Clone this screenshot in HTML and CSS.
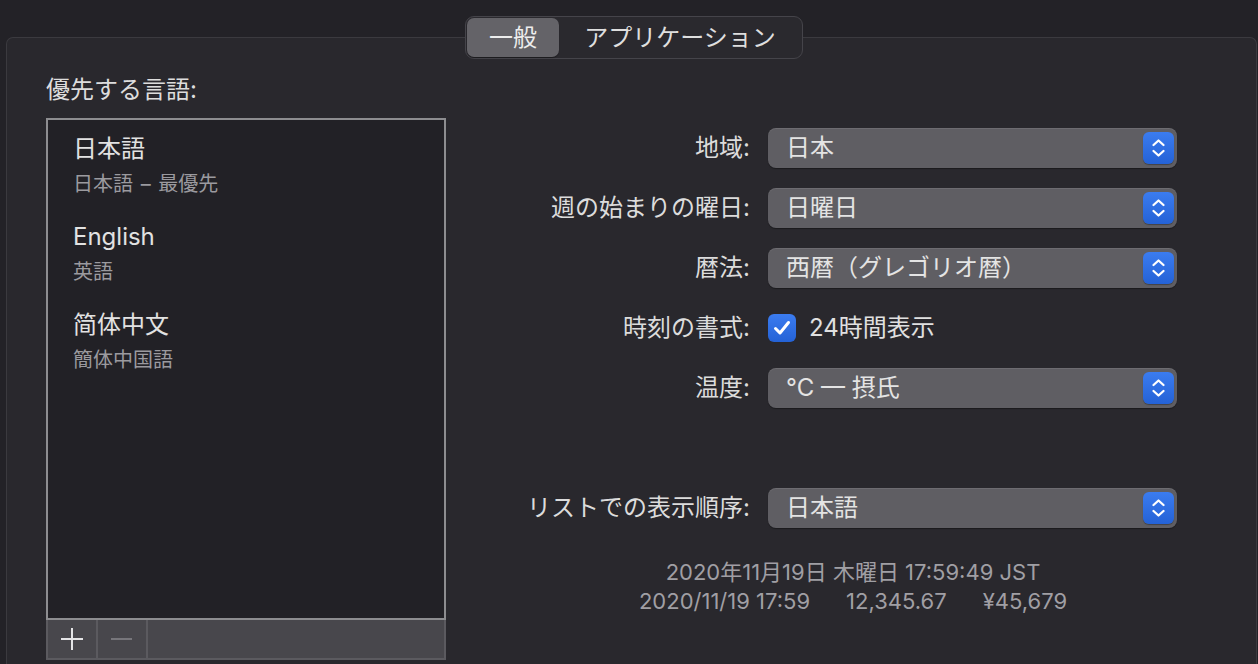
FILE: index.html
```html
<!DOCTYPE html>
<html lang="ja">
<head>
<meta charset="utf-8">
<title>言語と地域</title>
<link rel="stylesheet" href="styles.css">
</head>
<body>
<div class="window">
  <div class="tabs-row">
    <div class="segmented">
      <div class="seg seg-active">一般</div>
      <div class="seg seg-second">アプリケーション</div>
    </div>
  </div>
  <div class="panel">
    <div class="left">
      <div class="section-label">優先する言語:</div>
      <div class="langlist">
        <div class="lang-items">
          <div class="lang">
            <div class="lang-title">日本語</div>
            <div class="lang-sub">日本語 <span class="dash">–</span> 最優先</div>
          </div>
          <div class="lang">
            <div class="lang-title">English</div>
            <div class="lang-sub">英語</div>
          </div>
          <div class="lang">
            <div class="lang-title">简体中文</div>
            <div class="lang-sub">簡体中国語</div>
          </div>
        </div>
        <div class="list-bar">
          <div class="bar-btn">
            <svg width="22" height="22" viewBox="0 0 22 22"><path d="M0 11H22M11 0V22" stroke="#e4e4e6" stroke-width="2" fill="none"/></svg>
          </div>
          <div class="bar-btn">
            <svg width="22" height="22" viewBox="0 0 22 22"><path d="M0 11H21" stroke="#77767b" stroke-width="2" fill="none"/></svg>
          </div>
          <div class="bar-fill"></div>
        </div>
      </div>
    </div>
    <div class="right">
      <div class="form">
        <div class="row">
          <div class="label">地域:</div>
          <div class="popup"><span class="popup-text">日本</span><span class="stepper"><svg width="31" height="32" viewBox="0 0 31 32"><path d="M10.5 13L15.5 8.5L20.5 13M10.5 19L15.5 23.5L20.5 19" stroke="#fff" stroke-width="2.3" fill="none" stroke-linecap="round" stroke-linejoin="round"/></svg></span></div>
        </div>
        <div class="row">
          <div class="label">週の始まりの曜日:</div>
          <div class="popup"><span class="popup-text">日曜日</span><span class="stepper"><svg width="31" height="32" viewBox="0 0 31 32"><path d="M10.5 13L15.5 8.5L20.5 13M10.5 19L15.5 23.5L20.5 19" stroke="#fff" stroke-width="2.3" fill="none" stroke-linecap="round" stroke-linejoin="round"/></svg></span></div>
        </div>
        <div class="row">
          <div class="label">暦法:</div>
          <div class="popup"><span class="popup-text">西暦（グレゴリオ暦）</span><span class="stepper"><svg width="31" height="32" viewBox="0 0 31 32"><path d="M10.5 13L15.5 8.5L20.5 13M10.5 19L15.5 23.5L20.5 19" stroke="#fff" stroke-width="2.3" fill="none" stroke-linecap="round" stroke-linejoin="round"/></svg></span></div>
        </div>
        <div class="row">
          <div class="label">時刻の書式:</div>
          <div class="check-wrap">
            <span class="checkbox"><svg width="28" height="28" viewBox="0 0 28 28"><path d="M7.5 14.5L12 19L20.5 8.5" stroke="#fff" stroke-width="3" fill="none" stroke-linecap="round" stroke-linejoin="round"/></svg></span>
            <span class="check-text">24時間表示</span>
          </div>
        </div>
        <div class="row row-temp">
          <div class="label">温度:</div>
          <div class="popup"><span class="popup-text">°C — 摂氏</span><span class="stepper"><svg width="31" height="32" viewBox="0 0 31 32"><path d="M10.5 13L15.5 8.5L20.5 13M10.5 19L15.5 23.5L20.5 19" stroke="#fff" stroke-width="2.3" fill="none" stroke-linecap="round" stroke-linejoin="round"/></svg></span></div>
        </div>
        <div class="row row-order">
          <div class="label">リストでの表示順序:</div>
          <div class="popup"><span class="popup-text">日本語</span><span class="stepper"><svg width="31" height="32" viewBox="0 0 31 32"><path d="M10.5 13L15.5 8.5L20.5 13M10.5 19L15.5 23.5L20.5 19" stroke="#fff" stroke-width="2.3" fill="none" stroke-linecap="round" stroke-linejoin="round"/></svg></span></div>
        </div>
      </div>
      <div class="info">
        <div class="info-line">2020年11月19日 木曜日 17:59:49 JST</div>
        <div class="info-line info-line2"><span>2020/11/19 17:59</span><span>12,345.67</span><span>¥45,679</span></div>
      </div>
    </div>
  </div>
</div>
</body>
</html>
```

FILE: styles.css
```css
html, body {
  margin: 0;
  padding: 0;
}

body {
  background: #232227;
  color: #dddddd;
  font-family: "Inter", "Noto Sans CJK JP", sans-serif;
  overflow: hidden;
}

.window {
  width: 1258px;
  height: 664px;
  overflow: hidden;
}

.tabs-row {
  display: flex;
  justify-content: center;
  padding-top: 16px;
  padding-left: 10px;
  position: relative;
  z-index: 1;
}

.segmented {
  display: flex;
  box-sizing: border-box;
  width: 338px;
  height: 43px;
  padding: 1px;
  border: 1px solid #45444a;
  border-radius: 9px;
  background: #2a292e;
}

.seg {
  display: flex;
  align-items: center;
  justify-content: center;
  height: 39px;
  font-size: 24px;
  line-height: 30px;
  color: #dedede;
}

.seg-active {
  width: 92px;
  border-radius: 7px;
  background: #646368;
  box-shadow: 0 1px 1px rgba(0, 0, 0, 0.35);
  color: #ededed;
}

.seg-second {
  flex: 1;
}

.panel {
  display: flex;
  box-sizing: border-box;
  height: 640px;
  margin: -22px 1px 0 6px;
  border: 1px solid #3b3a3f;
  border-bottom: none;
  border-radius: 7px 7px 0 0;
  background: #29282d;
}

.left {
  padding: 37px 0 0 39px;
}

.section-label {
  font-size: 24px;
  line-height: 30px;
  margin-bottom: 13px;
}

.langlist {
  width: 400px;
}

.lang-items {
  box-sizing: border-box;
  height: 502px;
  padding: 14px 0 0 25px;
  border: 2px solid #8d8d90;
  background: #222126;
}

.lang {
  padding-bottom: 25px;
}

.lang-title {
  font-size: 24px;
  line-height: 30px;
  color: #e2e2e2;
  margin-bottom: 7px;
}

.lang-sub {
  font-size: 20px;
  line-height: 26px;
  color: #9b9a9f;
}

.dash {
  margin: 0 2px;
}

.list-bar {
  display: flex;
  box-sizing: border-box;
  height: 40px;
  border: 2px solid #5b5a5f;
  border-top: none;
  background: #48474c;
}

.bar-btn {
  display: flex;
  align-items: center;
  justify-content: center;
  width: 48px;
  border-right: 2px solid #5b5a5f;
}

.bar-fill {
  flex: 1;
}

.right {
  flex: 1;
  padding-top: 90px;
}

.form {
  padding-right: 79px;
}

.row {
  display: flex;
  align-items: center;
  justify-content: flex-end;
  gap: 18px;
  height: 40px;
  margin-bottom: 20px;
}

.row-temp {
  margin-top: 2px;
}

.row-order {
  margin-top: 80px;
  margin-bottom: 0;
}

.label {
  font-size: 24px;
  line-height: 30px;
  text-align: right;
  white-space: nowrap;
  color: #dcdcdc;
}

.popup {
  display: flex;
  align-items: center;
  justify-content: space-between;
  box-sizing: border-box;
  width: 409px;
  height: 40px;
  padding: 0 3px 0 18px;
  border-radius: 8px;
  background: #5f5e63;
  box-shadow: inset 0 1px 0 rgba(255, 255, 255, 0.09), 0 1px 1px rgba(0, 0, 0, 0.35);
}

.popup-text {
  font-size: 24px;
  line-height: 30px;
  color: #e4e4e4;
  white-space: nowrap;
}

.stepper {
  display: flex;
  width: 31px;
  height: 32px;
  border-radius: 6px;
  background: linear-gradient(#3b7cf0, #2462d6);
  box-shadow: 0 1px 1px rgba(0, 0, 0, 0.3);
}

.check-wrap {
  display: flex;
  align-items: center;
  gap: 13px;
  width: 409px;
}

.checkbox {
  display: flex;
  width: 28px;
  height: 28px;
  border-radius: 6px;
  background: linear-gradient(#3b7cf0, #2462d6);
}

.check-text {
  font-size: 24px;
  line-height: 30px;
  color: #e0e0e0;
}

.info {
  margin-top: 30px;
  padding-left: 4px;
  text-align: center;
  font-size: 22px;
  line-height: 29px;
  color: #a09fa4;
}

.info-line2 {
  display: flex;
  justify-content: center;
  gap: 36px;
}
```
